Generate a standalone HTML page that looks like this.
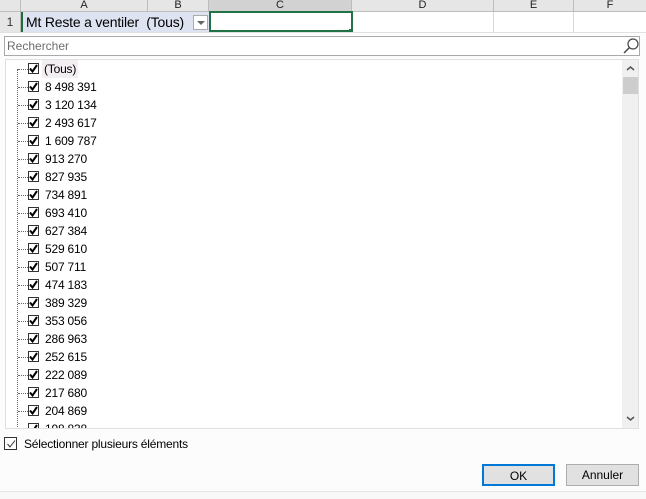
<!DOCTYPE html>
<html><head><meta charset="utf-8"><style>
*{margin:0;padding:0;box-sizing:border-box}
body{width:646px;height:499px;overflow:hidden;background:#fcfcfc;font-family:"Liberation Sans",sans-serif;position:relative;color:#000}
.a{position:absolute}
.hdr{top:0;height:12px;background:#e6e6e6;border-bottom:1px solid #bdbdbd;font-size:11px;text-align:center;line-height:10px;color:#222;overflow:hidden}
.cell{top:12px;height:20px;background:#fff;border-right:1px solid #d8d8d8}
.item{position:absolute;left:0;height:18px;font-size:12px;line-height:18px}
.cb{position:absolute;left:27px;top:3px;width:11px;height:11px;border:1px solid #333;background:#fff}
.cb svg{position:absolute;left:0;top:0}
.dash{position:absolute;left:17px;top:9px;width:10px;border-top:1px dotted #666}
.lbl{position:absolute;left:44px;top:0;letter-spacing:-0.2px}
.btn{top:464px;height:22px;font-size:12px;line-height:20px;text-align:center;background:#e1e1e1;border:1px solid #adadad}
</style></head><body>
<div class="a hdr" style="left:0;width:21px;border-right:1px solid #bdbdbd"></div>
<div class="a hdr" style="left:21px;width:127px;border-right:1px solid #bdbdbd">A</div>
<div class="a hdr" style="left:148px;width:61px;border-right:1px solid #bdbdbd">B</div>
<div class="a hdr" style="left:209px;width:143px;border-right:1px solid #bdbdbd;background:#d2d2d2">C</div>
<div class="a hdr" style="left:352px;width:142px;border-right:1px solid #bdbdbd">D</div>
<div class="a hdr" style="left:494px;width:80px;border-right:1px solid #bdbdbd">E</div>
<div class="a hdr" style="left:574px;width:72px">F</div>
<div class="a" style="left:0;top:12px;width:21px;height:20px;background:#e6e6e6;border-right:1px solid #bdbdbd;font-size:12px;text-align:center;line-height:20px;color:#333">1</div>
<div class="a" style="left:21px;top:12px;width:188px;height:20px;background:#dde3f1;font-size:14px;line-height:20px;padding-left:3px;border-left:2px solid #1e6e3c;letter-spacing:-0.2px">Mt Reste a ventiler&nbsp; (Tous)</div>
<div class="a" style="left:193px;top:15px;width:15px;height:15px;background:#fff;border:1px solid #aaa"><div class="a" style="left:3px;top:5px;border:4px solid transparent;border-top:4px solid #666"></div></div>
<div class="a cell" style="left:352px;width:142px"></div>
<div class="a cell" style="left:494px;width:80px"></div>
<div class="a cell" style="left:574px;width:72px;border:none"></div>
<div class="a" style="left:209px;top:11px;width:144px;height:21px;border:2px solid #217346;background:#fff"></div>
<div class="a" style="left:349px;top:29px;width:4px;height:3px;background:#217346"></div>
<div class="a" style="left:0;top:32px;width:646px;height:1px;background:#e0e0e0"></div>
<div class="a" style="left:4px;top:36px;width:636px;height:20px;border:1px solid #aaa;background:#fff;font-size:12px;line-height:18px;padding-left:2px;color:#6d6d6d">Rechercher</div>
<svg class="a" style="left:622px;top:37px" width="18" height="18"><circle cx="11" cy="7" r="5" fill="none" stroke="#444" stroke-width="1.2"/><line x1="7.5" y1="10.5" x2="2" y2="16" stroke="#444" stroke-width="1.4"/></svg>
<div class="a" style="left:5px;top:59px;width:634px;height:370px;border:1px solid #e0e0e0;background:#fff;overflow:hidden">
<div class="a" style="left:11px;top:9px;height:370px;border-left:1px dotted #666"></div>
<div id="l" class="a" style="left:-5px;top:0;width:620px;height:370px"></div>
<div class="a" style="left:616px;top:0;width:17px;height:368px;background:#f0f0f0"></div>
<div class="a" style="left:617px;top:17px;width:15px;height:17px;background:#cdcdcd"></div>
<svg class="a" style="left:617px;top:4px" width="15" height="10"><path d="M4 6 L7.5 3 L11 6" fill="none" stroke="#555" stroke-width="1.5"/></svg>
<svg class="a" style="left:617px;top:354px" width="15" height="10"><path d="M4 3 L7.5 6 L11 3" fill="none" stroke="#555" stroke-width="1.5"/></svg>
</div>
<div class="a" style="left:4px;top:437px;width:13px;height:13px;border:1px solid #333;background:#fff"><svg class="a" style="left:1px;top:1px" width="10" height="10"><path d="M1.5 5 L4 8 L9 1.5" fill="none" stroke="#333" stroke-width="1"/></svg></div>
<div class="a" style="left:24px;top:437px;font-size:12px;line-height:14px;letter-spacing:-0.2px">Sélectionner plusieurs éléments</div>
<div class="a btn" style="left:482px;width:73px;border:2px solid #0078d7">OK</div>
<div class="a btn" style="left:566px;width:73px">Annuler</div>
<div class="a" style="left:0;top:491px;width:646px;height:8px;border-top:1px solid #e3e3e3;background:#f8f8f8"></div>
<script>
var v=["(Tous)","8 498 391","3 120 134","2 493 617","1 609 787","913 270","827 935","734 891","693 410","627 384","529 610","507 711","474 183","389 329","353 056","286 963","252 615","222 089","217 680","204 869","198 838"];
var ck='<svg width="9" height="9"><path d="M1 4.5 L3.5 7.5 L8 1" fill="none" stroke="#000" stroke-width="2"/></svg>';
var h="";v.forEach(function(t,i){h+='<div class="item" style="top:'+(i*18)+'px;width:600px"><div class="dash"></div><div class="cb">'+ck+'</div><div class="lbl"'+(i==0?' style="background:#f3eef2;left:41px;padding:0 2px"':'')+'>'+t+'</div></div>';});
document.getElementById("l").innerHTML=h;
</script>
</body></html>
